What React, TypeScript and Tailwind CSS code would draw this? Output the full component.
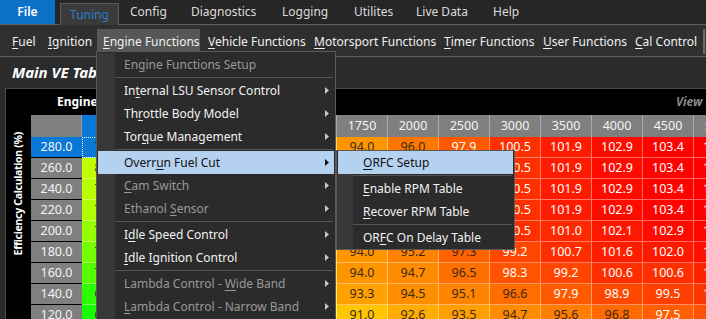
import React from "react";

const cols = [500, 750, 1000, 1250, 1500, 1750, 2000, 2500, 3000, 3500, 4000, 4500, 5000];
const loads = [280, 260, 240, 220, 200, 180, 160, 140, 120];

// visible part of the map (1750 .. 5000 rpm)
const right: number[][] = [
  [94.0, 96.0, 97.9, 100.5, 101.9, 102.9, 103.4, 103.8],
  [94.0, 96.0, 97.9, 100.5, 101.9, 102.9, 103.4, 103.8],
  [94.0, 96.0, 97.9, 100.5, 101.9, 102.9, 103.4, 103.8],
  [94.0, 96.0, 97.9, 100.5, 101.9, 102.9, 103.4, 103.8],
  [94.0, 96.0, 97.9, 100.5, 101.0, 102.1, 102.9, 103.2],
  [94.0, 95.2, 97.3, 99.2, 100.7, 101.6, 102.0, 102.6],
  [94.0, 94.7, 96.5, 98.3, 99.2, 100.6, 100.6, 101.4],
  [93.3, 94.5, 95.1, 96.6, 97.9, 98.9, 99.5, 100.2],
  [91.0, 92.6, 93.5, 94.7, 95.6, 96.8, 97.5, 98.4],
];
const first = [78.0, 80.2, 79.5, 78.6, 76.0, 72.8, 70.1, 66.2, 64.0];

const table = loads.map((_, r) =>
  cols.map((_, c) => {
    if (c >= 5) return right[r][c - 5];
    const t = c / 5;
    return Math.round((first[r] + (right[r][0] - first[r]) * t) * 10) / 10;
  })
);

function cellColor(v: number) {
  const hue = v >= 90 ? ((103.6 - v) / 13.6) * 50 : Math.min(120, 50 + (90 - v) * 2.5);
  return `hsl(${Math.max(0, hue)}, 100%, 50%)`;
}

function Acc({ t }: { t: string }) {
  const i = t.indexOf("&");
  if (i < 0) return <>{t}</>;
  return (
    <>
      {t.slice(0, i)}
      <span className="underline underline-offset-2">{t[i + 1]}</span>
      {t.slice(i + 2)}
    </>
  );
}

type Item = { label?: string; sep?: boolean; disabled?: boolean; arrow?: boolean; active?: boolean };

const mainItems: Item[] = [
  { label: "En&gine Functions Setup", disabled: true },
  { sep: true },
  { label: "In&ternal LSU Sensor Control", arrow: true },
  { label: "Th&rottle Body Model", arrow: true },
  { label: "Tor&que Management", arrow: true },
  { sep: true },
  { label: "Overr&un Fuel Cut", arrow: true, active: true },
  { label: "&Cam Switch", arrow: true, disabled: true },
  { label: "Ethanol &Sensor", arrow: true, disabled: true },
  { sep: true },
  { label: "I&dle Speed Control", arrow: true },
  { label: "&Idle Ignition Control", arrow: true },
  { sep: true },
  { label: "Lambda Control - &Wide Band", arrow: true, disabled: true },
  { label: "&Lambda Control - Narrow Band", arrow: true, disabled: true },
  { sep: true },
];

const subItems: Item[] = [
  { label: "&ORFC Setup", active: true },
  { sep: true },
  { label: "&Enable RPM Table" },
  { label: "&Recover RPM Table" },
  { sep: true },
  { label: "OR&FC On Delay Table" },
];

function Arrow({ dark }: { dark?: boolean }) {
  return (
    <svg width="4" height="7" viewBox="0 0 4 7" aria-hidden="true">
      <path d="M0 0L4 3.5L0 7z" fill={dark ? "#111" : "#c8c8c8"} />
    </svg>
  );
}

function MenuList({ items, gutter, sub }: { items: Item[]; gutter: number; sub?: boolean }) {
  return (
    <>
      {items.map((it, i) => {
        if (it.sep)
          return (
            <div key={i} className="flex h-[3px]">
              <div className="shrink-0 bg-[#383838]" style={{ width: gutter }} />
              <div className="flex flex-1 items-center pr-[2px]">
                <div className="h-px w-full bg-[#555]" />
              </div>
            </div>
          );
        if (it.active)
          return (
            <div key={i} className="mx-px flex h-[23px] items-center bg-[#b4d2f0] text-[#111]">
              <div className="flex-1" style={{ paddingLeft: gutter + (sub ? 9 : 8) }}>
                <Acc t={it.label!} />
              </div>
              {it.arrow && (
                <div className="mr-[5px] flex items-center">
                  <Arrow dark />
                </div>
              )}
            </div>
          );
        return (
          <div key={i} className="flex h-[23px]">
            <div className="shrink-0 bg-[#383838]" style={{ width: gutter }} />
            <div
              className={`flex flex-1 items-center ${it.disabled ? "text-[#999]" : "text-[#f2f2f2]"}`}
              style={{ paddingLeft: sub ? 10 : 9 }}
            >
              <span className="flex-1">
                <Acc t={it.label!} />
              </span>
              {it.arrow && (
                <span className="mr-[6px] flex items-center">
                  <Arrow />
                </span>
              )}
            </div>
          </div>
        );
      })}
    </>
  );
}

export default function App() {
  const top = [
    { t: "Config", w: "w-[61px]" },
    { t: "Diagnostics", w: "w-[91px]" },
    { t: "Logging", w: "w-[72px]" },
    { t: "Utilites", w: "w-[62px]" },
    { t: "Live Data", w: "w-[77px]" },
    { t: "Help", w: "w-[60px]" },
  ];
  const second = [
    { t: "&Fuel", w: "w-[36px]" },
    { t: "&Ignition", w: "w-[55px]" },
    { t: "&Engine Functions", w: "w-[103px]", on: true },
    { t: "&Vehicle Functions", w: "w-[106px]" },
    { t: "&Motorsport Functions", w: "w-[130px]" },
    { t: "&Timer Functions", w: "w-[99px]" },
    { t: "&User Functions", w: "w-[92px]" },
    { t: "&Cal Control", w: "w-[74px]" },
  ];

  return (
    <div className="relative h-[319px] w-[706px] overflow-hidden bg-[#2b2b2b] font-['Noto_Sans',sans-serif] text-[12px] text-[#f0f0f0]">
      {/* app menu */}
      <div className="flex h-[25px] border-b border-[#606060] bg-[#262626]">
        <div className="flex h-[24px] w-[55px] items-center justify-center bg-[#0c72c8] font-semibold text-white">File</div>
        <div className="ml-[5px] mt-[3px] flex h-[22px] w-[59px] items-center justify-center border border-b-0 border-[#5a5a5a] bg-[#3a3a3a] text-[#2a7ccc]">
          Tuning
        </div>
        <div className="ml-[11px] flex items-center text-[#dcdcdc]">
          {top.map((m) => (
            <div key={m.t} className={m.w}>
              {m.t}
            </div>
          ))}
        </div>
      </div>

      {/* tuning ribbon */}
      <div className="flex h-[32px] border-b border-[#5e5e5e] bg-[#2f2f2f] pl-[6px] pt-[4px]">
        {second.map((m) => (
          <div
            key={m.t}
            className={`flex h-[25px] shrink-0 items-center pl-[6px] ${m.w} ${m.on ? "mr-[2px] bg-[#575757]" : ""}`}
          >
            <span className="whitespace-nowrap">
              <Acc t={m.t} />
            </span>
          </div>
        ))}
        <div className="h-[25px] w-[10px] shrink-0 border-l-2 border-[#6a6a6a] bg-[#3a3a3a]" />
      </div>

      {/* title */}
      <div className="flex h-[31px] items-center pl-[12px] text-[15px] font-bold italic text-white">Main VE Table</div>

      {/* map panel */}
      <div className="ml-[5px] border-l border-t border-[#4a4a4a] bg-black">
        <div className="flex h-[26px] items-center">
          <div className="ml-[51px] whitespace-nowrap font-bold text-white">Engine Speed (RPM)</div>
          <div className="ml-auto mr-[-31px] whitespace-nowrap pl-[10px] font-bold italic text-[#8a8a8a]">View Mode</div>
        </div>
        <div className="flex">
          <div className="flex w-[25px] shrink-0 items-start justify-center pt-[17px]">
            <div className="rotate-180 whitespace-nowrap text-[10.5px] font-bold tracking-[-0.3px] text-white [writing-mode:vertical-rl]">
              Efficiency Calculation (%)
            </div>
          </div>
          <div className="grid grid-cols-[repeat(14,51px)] text-[12.5px]">
            <div className="h-[22px] border-r border-[#9a9a9a] bg-[#7f7f7f]" />
            {cols.map((c, i) => (
              <div
                key={c}
                className={`flex h-[22px] items-center justify-center border-r ${
                  i === 0 ? "border-[#0a78d7] bg-[#0a78d7]" : "border-[#a9a9a9] bg-[#7f7f7f]"
                } text-[#f4f4f4]`}
              >
                {c}
              </div>
            ))}
            {loads.map((l, r) => (
              <React.Fragment key={l}>
                <div
                  className={`flex h-[21px] items-center justify-center border-b border-black text-[#f4f4f4] ${
                    r === 0 ? "bg-[#0a78d7]" : "bg-[#7f7f7f]"
                  }`}
                >
                  {l.toFixed(1)}
                </div>
                {table[r].map((v, c) => {
                  const sel = r === 0 && c === 0;
                  return (
                    <div
                      key={c}
                      className={`flex h-[21px] items-center justify-center border-b border-r border-white/40 ${
                        sel ? "outline-1 -outline-offset-1 outline-dotted outline-white" : ""
                      } ${v >= 97.5 ? "text-white" : "text-[#3a2a12]"}`}
                      style={{ backgroundColor: sel ? "#0a78d7" : cellColor(v) }}
                    >
                      {v.toFixed(1)}
                    </div>
                  );
                })}
              </React.Fragment>
            ))}
          </div>
        </div>
      </div>

      {/* Engine Functions dropdown */}
      <div className="absolute left-[96px] top-[51px] w-[240px] border border-[#5a5a5a] bg-[#2b2b2b] pt-px">
        <MenuList items={mainItems} gutter={18} />
      </div>

      {/* Overrun Fuel Cut submenu */}
      <div className="absolute left-[336px] top-[150px] w-[179px] border border-[#5a5a5a] bg-[#2b2b2b]">
        <MenuList items={subItems} gutter={16} sub />
      </div>
    </div>
  );
}
